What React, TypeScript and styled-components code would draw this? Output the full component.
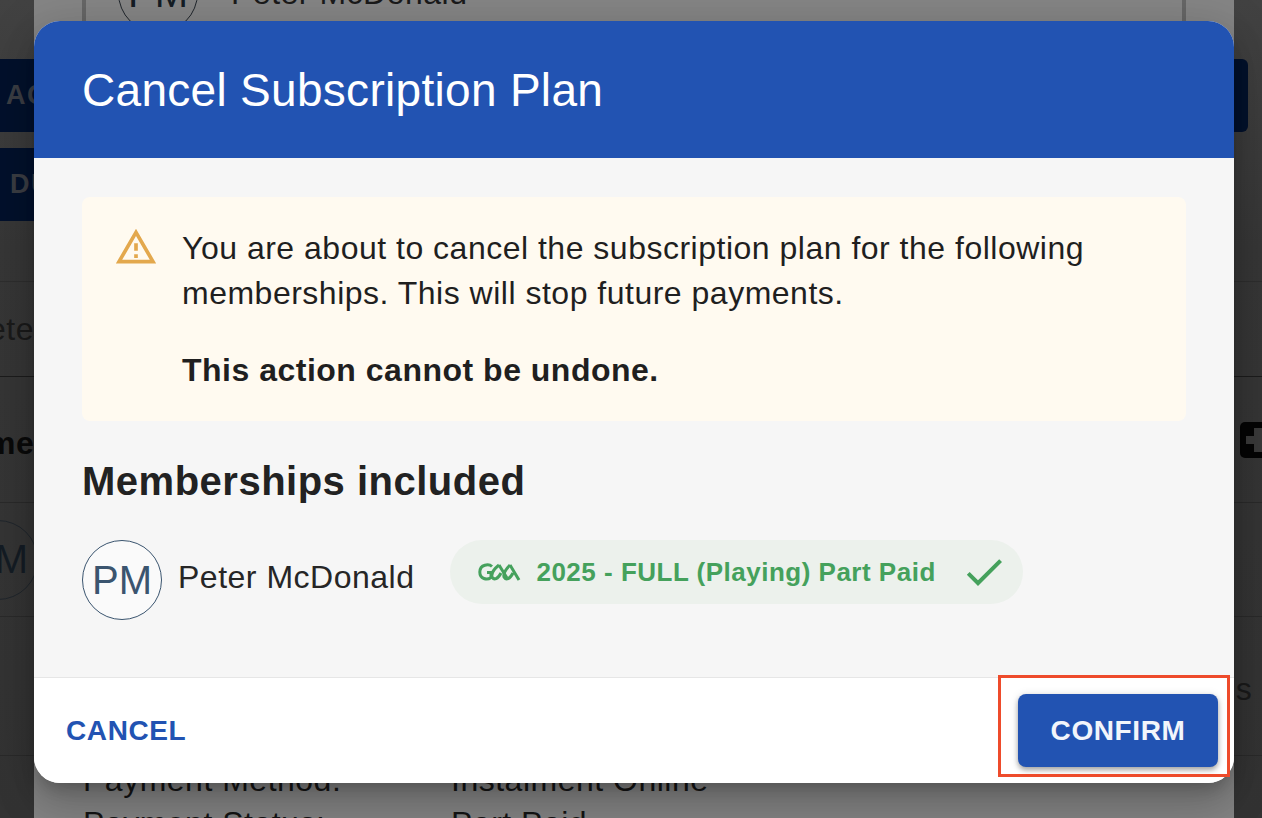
import React from 'react'
import styled, { createGlobalStyle } from 'styled-components'

const GlobalStyle = createGlobalStyle`
html, body {
  margin: 0;
  padding: 0;
  background: #333;
}
body {
  font-family: "Liberation Sans", Arial, sans-serif;
}
`

const Page = styled.div`
position: relative;
width: 1262px;
height: 818px;
overflow: hidden;
background: linear-gradient(180deg, #424242 0%, #373737 30%, #333 100%);
color: #111;
`

// 一番奥のページ(暗くなっている)
const BasePage = styled.div`
display: flex;
flex-direction: column;
padding-top: 59px;
`

const ActionRow = styled.div<{ $height: number, $line?: boolean }>`
height: ${props => props.$height}px;
box-sizing: border-box;
display: flex;
justify-content: space-between;
align-items: flex-start;
padding-right: 14px;
${props => props.$line ? 'border-bottom: 1px solid #2e2e2e;' : ''}
`

const ActionButton = styled.div<{ $indent: number }>`
width: 60px;
height: 73px;
box-sizing: border-box;
padding-left: ${props => props.$indent}px;
background: #03112c;
border-radius: 0 6px 6px 0;
color: #3b3e44;
font-size: 27px;
font-weight: bold;
letter-spacing: 1.5px;
line-height: 73px;
white-space: nowrap;
`

const TableRow = styled.div<{ $height: number, $line?: string }>`
height: ${props => props.$height}px;
flex: none;
box-sizing: border-box;
display: flex;
align-items: center;
justify-content: space-between;
border-bottom: 1px solid ${props => props.$line || '#2a2a2a'};
`

const SideText = styled.div<{ $bold?: boolean, $shift?: number, $drop?: number, $pull?: number }>`
margin-left: ${props => props.$shift || 0}px;
margin-right: ${props => props.$pull || 0}px;
margin-top: ${props => props.$drop || 0}px;
font-size: 32px;
letter-spacing: 0.5px;
font-weight: ${props => props.$bold ? 'bold' : 'normal'};
color: ${props => props.$bold ? '#0a0a0a' : '#1a1a1a'};
white-space: nowrap;
`

const BackAvatar = styled.div<{ $shift?: number }>`
flex: none;
margin-left: ${props => props.$shift || 0}px;
width: 80px;
height: 80px;
box-sizing: border-box;
border: 1px solid #20262c;
border-radius: 50%;
color: #141c24;
font-size: 40px;
display: flex;
align-items: center;
justify-content: center;
`

const PlusBox = styled.div`
position: relative;
flex: none;
width: 36px;
margin-right: -14px;
height: 36px;
background: #050505;
border-radius: 5px;
&::before {
  content: "";
  position: absolute;
  left: 6px;
  top: 14px;
  width: 30px;
  height: 8px;
  background: #3a3a3a;
}
&::after {
  content: "";
  position: absolute;
  left: 14px;
  top: 6px;
  width: 8px;
  height: 24px;
  background: #3a3a3a;
}
`

// 途中のダイアログ(キャンセルダイアログの後ろ)
const BackDialog = styled.div`
position: absolute;
top: 0;
bottom: 0;
left: 34px;
right: 28px;
box-sizing: border-box;
padding: 0 48px;
display: flex;
flex-direction: column;
justify-content: space-between;
background: #858585;
`

const BackCard = styled.div`
width: 1104px;
height: 80px;
box-sizing: border-box;
margin-top: -47px;
padding-left: 32px;
display: flex;
align-items: center;
gap: 33px;
border-left: 4px solid #666;
border-right: 4px solid #666;
`

const BackInfo = styled.div`
margin: 0 0 -27px 1px;
display: grid;
grid-template-columns: 368px 1fr;
font-size: 32px;
line-height: 43px;
letter-spacing: 0.5px;
color: #151515;
white-space: nowrap;
`

const Modal = styled.div`
position: absolute;
top: 21px;
left: 34px;
width: 1200px;
height: 762px;
border-radius: 26px;
overflow: hidden;
display: flex;
flex-direction: column;
background: #f6f6f6;
box-shadow: 0 11px 15px -7px rgba(0, 0, 0, 0.2), 0 24px 38px 3px rgba(0, 0, 0, 0.14), 0 9px 46px 8px rgba(0, 0, 0, 0.12);
`

const Header = styled.header`
height: 137px;
flex: none;
box-sizing: border-box;
padding: 2px 48px 0;
display: flex;
align-items: center;
background: #2253b2;
`

const Title = styled.h2`
margin: 0;
color: #fff;
font-size: 46px;
font-weight: normal;
letter-spacing: 0.3px;
line-height: 1.2;
`

const Body = styled.div`
flex: 1;
box-sizing: border-box;
padding: 39px 48px 0;
`

const Alert = styled.div`
height: 224px;
box-sizing: border-box;
padding: 29px 32px 0;
display: flex;
gap: 24px;
background: #fffaf0;
border-radius: 8px;
`

const AlertIcon = styled.svg`
flex: none;
width: 44px;
height: 44px;
margin-top: -1px;
fill: #e3a84d;
`

const AlertText = styled.div`
color: #1f1f1f;
font-size: 32px;
line-height: 45px;
letter-spacing: 0.5px;
`

const AlertStrong = styled.div`
margin-top: 32px;
font-weight: bold;
`

const SectionTitle = styled.h3`
margin: 37px 0 0;
color: #222;
font-size: 40px;
line-height: 46px;
font-weight: bold;
letter-spacing: 0.5px;
`

const MemberRow = styled.div`
margin-top: 36px;
display: flex;
align-items: center;
`

const Avatar = styled.div`
flex: none;
width: 80px;
height: 80px;
box-sizing: border-box;
border: 1px solid #3b556f;
border-radius: 50%;
background: #fafafa;
color: #3b556f;
display: flex;
align-items: center;
justify-content: center;
font-size: 40px;
`

const MemberName = styled.div`
margin: 0 0 6px 16px;
color: #262626;
font-size: 32px;
letter-spacing: 0.5px;
white-space: nowrap;
`

const Pill = styled.div`
margin: 0 0 16px 36px;
height: 64px;
box-sizing: border-box;
padding: 0 15px 0 28px;
display: flex;
align-items: center;
border-radius: 32px;
background: #ecf1ec;
color: #45a15c;
font-size: 26px;
font-weight: bold;
letter-spacing: 0.5px;
white-space: nowrap;
`

const GaaLogo = styled.svg`
flex: none;
width: 43px;
height: 18px;
margin-right: 15px;
`

const CheckIcon = styled.svg`
flex: none;
width: 48px;
height: 48px;
margin-left: 24px;
fill: #45a15c;
`

const Footer = styled.footer`
height: 106px;
flex: none;
box-sizing: border-box;
border-top: 1px solid #e6e6e6;
padding: 0 16px 0 32px;
display: flex;
align-items: center;
justify-content: space-between;
background: #fff;
`

const TextButton = styled.button`
border: 0;
padding: 0;
background: none;
color: #2253b2;
font-family: inherit;
font-size: 28px;
font-weight: bold;
letter-spacing: 0.6px;
`

const ConfirmButton = styled.button`
width: 200px;
height: 73px;
border: 0;
border-radius: 8px;
background: #2253b2;
color: #f2f5fb;
font-family: inherit;
font-size: 28px;
font-weight: bold;
letter-spacing: 0.6px;
box-shadow: 0 3px 5px rgba(0, 0, 0, 0.3), 0 1px 10px rgba(0, 0, 0, 0.12);
`

// スクリーンショットに付いていた赤枠
const Highlight = styled.div`
position: absolute;
left: 998px;
top: 675px;
width: 232px;
height: 102px;
box-sizing: border-box;
border: 3px solid #ee4b2b;
`

const App = () => {
  return (
    <Page>
      <GlobalStyle />
      <BasePage>
        <ActionRow $height={89}>
          <ActionButton $indent={6}>AC</ActionButton>
          <ActionButton $indent={0} />
        </ActionRow>
        <ActionRow $height={134} $line>
          <ActionButton $indent={10}>DU</ActionButton>
        </ActionRow>
        <TableRow $height={95} $line="#1c1c1c">
          <SideText $shift={-12}>ete</SideText>
        </TableRow>
        <TableRow $height={126}>
          <SideText $bold $shift={-13} $drop={8}>me</SideText>
          <PlusBox />
        </TableRow>
        <TableRow $height={114}>
          <BackAvatar $shift={-42}>PM</BackAvatar>
        </TableRow>
        <TableRow $height={139}>
          <span />
          <SideText $pull={-18} $drop={6}>s p</SideText>
        </TableRow>
      </BasePage>

      <BackDialog>
        <BackCard>
          <BackAvatar>PM</BackAvatar>
          <SideText>Peter McDonald</SideText>
        </BackCard>
        <BackInfo>
          <div>Payment Method:</div>
          <div>Instalment Online</div>
          <div>Payment Status:</div>
          <div>Part Paid</div>
        </BackInfo>
      </BackDialog>

      <Modal>
        <Header>
          <Title>Cancel Subscription Plan</Title>
        </Header>
        <Body>
          <Alert>
            <AlertIcon viewBox="0 0 24 24">
              <path d="M12 5.99 19.53 19H4.47L12 5.99M12 2 1 21h22L12 2zm1 14h-2v2h2v-2zm0-6h-2v4h2v-4z" />
            </AlertIcon>
            <AlertText>
              You are about to cancel the subscription plan for the following
              <br />
              memberships. This will stop future payments.
              <AlertStrong>This action cannot be undone.</AlertStrong>
            </AlertText>
          </Alert>
          <SectionTitle>Memberships included</SectionTitle>
          <MemberRow>
            <Avatar>PM</Avatar>
            <MemberName>Peter McDonald</MemberName>
            <Pill>
              <GaaLogo viewBox="0 0 43 18" fill="none" stroke="#45a15c" strokeWidth="3">
                <path d="M14 3.5 C11 0.8 2 1 1.8 9 C1.8 16 9 17.5 13 14.5 L13 9.5 L9 9.5" />
                <path d="M21 2 L29 15 M21 2 C16 6 13 10 14 14 C16 17.5 20 16 23 10" />
                <path d="M32 2 L41 17 M32 2 C28 6 25 10 26 14 C28 17.5 32 16 35 10" />
              </GaaLogo>
              2025 - FULL (Playing) Part Paid
              <CheckIcon viewBox="0 0 24 24">
                <path d="M9 16.17 4.83 12l-1.42 1.41L9 19 21 7l-1.41-1.41z" />
              </CheckIcon>
            </Pill>
          </MemberRow>
        </Body>
        <Footer>
          <TextButton>CANCEL</TextButton>
          <ConfirmButton>CONFIRM</ConfirmButton>
        </Footer>
      </Modal>
      <Highlight />
    </Page>
  )
}

export default App
